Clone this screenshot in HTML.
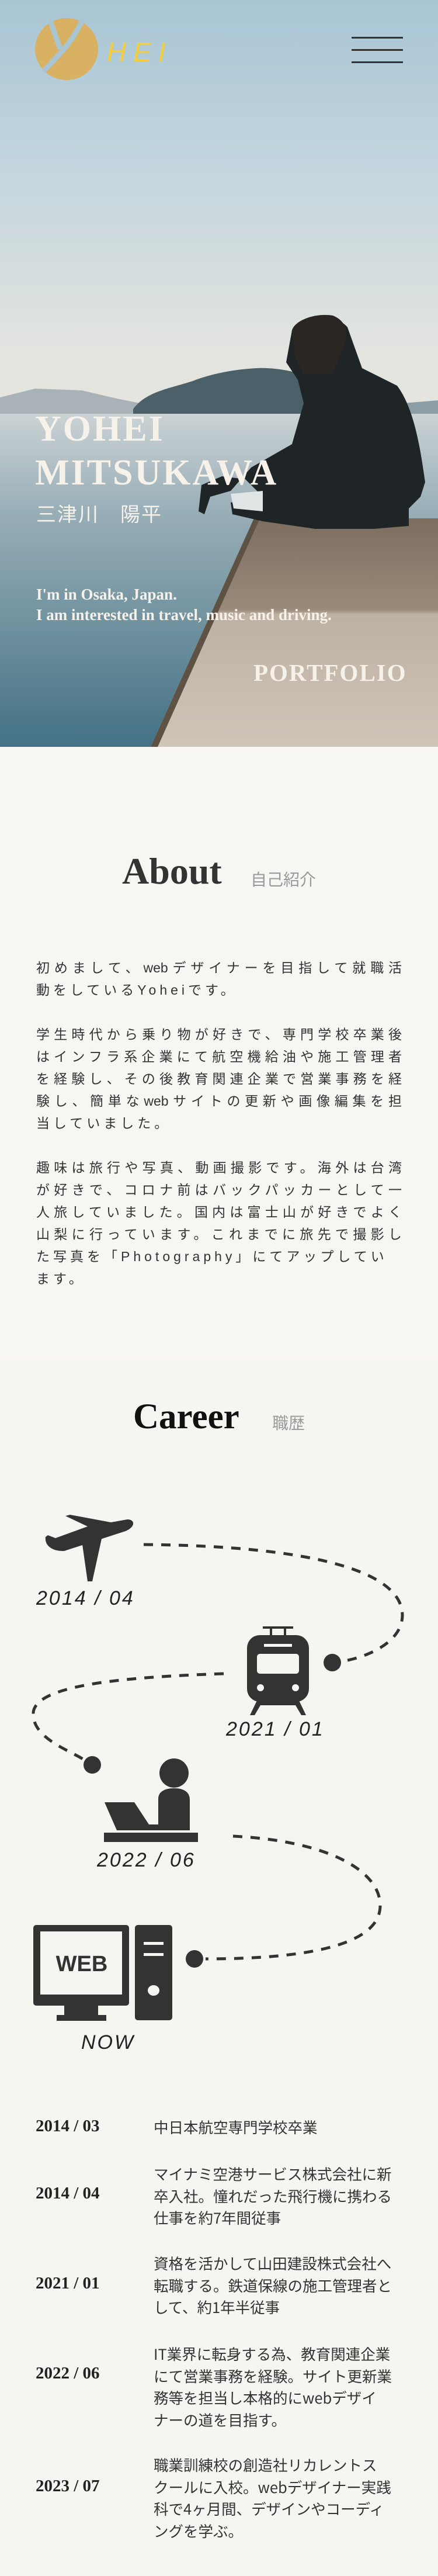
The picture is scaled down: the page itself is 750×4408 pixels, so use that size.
<!DOCTYPE html>
<html><head><meta charset="utf-8">
<style>
*{margin:0;padding:0;box-sizing:border-box}
body{width:750px;height:4408px;position:relative;background:#f5f6f1;font-family:"Liberation Sans","Noto Sans CJK JP",sans-serif;overflow:hidden}
.a{position:absolute;white-space:nowrap}
.serif{font-family:"Liberation Serif","Noto Serif CJK SC",serif}
.hero{color:#f6f1e9;font-weight:bold}
.p{position:absolute;left:62px;width:626px;font-size:23px;color:#333;line-height:38px}
.p div{text-align:justify;text-align-last:justify;height:38px}
.p div.l{text-align-last:left;letter-spacing:6px}
.hand{font-style:italic;font-size:34px;color:#222;letter-spacing:3px}
.date{position:absolute;left:61px;font-family:"Liberation Serif",serif;font-weight:bold;font-size:29px;color:#222}
.txt{position:absolute;left:263px;width:430px;font-size:25.5px;line-height:37.6px;color:#333;font-family:"Noto Sans CJK JP",sans-serif}
</style></head><body>

<svg class="a" style="left:0;top:0" width="750" height="1278" viewBox="0 0 750 1278">
<defs>
<linearGradient id="sky" x1="0" y1="0" x2="0" y2="1">
<stop offset="0" stop-color="#a8c5d4"/><stop offset="0.35" stop-color="#bfd3dd"/><stop offset="0.85" stop-color="#e2e4e0"/><stop offset="1" stop-color="#e6e4de"/>
</linearGradient>
<linearGradient id="sea" x1="0" y1="0" x2="0" y2="1">
<stop offset="0" stop-color="#ccd3d5"/><stop offset="0.3" stop-color="#98aeb7"/><stop offset="0.7" stop-color="#688c9a"/><stop offset="1" stop-color="#447185"/>
</linearGradient>
<linearGradient id="pier" x1="0" y1="0" x2="0" y2="1">
<stop offset="0" stop-color="#7d6d5f"/><stop offset="0.4" stop-color="#9a8a7a"/><stop offset="0.42" stop-color="#bdb1a3"/><stop offset="1" stop-color="#cfc5b8"/>
</linearGradient>
</defs>
<rect width="750" height="705" fill="url(#sky)"/>
<rect y="705" width="750" height="573" fill="url(#sea)"/>
<path d="M0,680 L60,665 L140,668 L200,682 L240,690 L300,700 L300,708 L0,708Z" fill="#a9b3b7"/>
<path d="M228,700 C250,670 290,665 330,652 C360,640 400,632 440,630 C480,628 520,640 560,652 C600,660 640,670 680,690 L705,708 L228,708Z" fill="#4b6068"/>
<path d="M690,690 L750,685 L750,708 L700,708Z" fill="#8c9ea5"/>
<path d="M435,887 L750,887 L750,1278 L258,1278Z" fill="url(#pier)"/>
<path d="M435,887 L258,1278 L270,1278 L445,887Z" fill="#5e5245"/>
<path d="M500,565 C520,540 575,535 595,560 L620,630 L680,660 C710,700 720,770 728,825 L720,850 L700,870 L700,900 L640,905 L540,905 L450,892 L398,880 L395,860 L450,850 L440,840 L420,820 L380,815 L345,830 L340,875 L350,880 L360,850 L395,840 L430,800 L500,760 L520,690 L510,650 L490,620 Z" fill="#1f2427"/>
<path d="M395,845 L450,840 L450,875 L400,870Z" fill="#dfe4e5"/>
<path d="M500,565 C505,548 540,535 570,540 C590,548 598,565 590,590 L570,640 L520,640 L505,610Z" fill="#2a2624"/>
</svg>

<svg class="a" style="left:0;top:0" width="300" height="150" viewBox="0 0 300 150">
<ellipse cx="114" cy="84" rx="54" ry="53" fill="#d8b163"/>
<path d="M86,34 C90,50 98,68 103,84" stroke="#a9c5d2" stroke-width="9" fill="none"/>
<path d="M142,32 C130,60 110,85 95,100 C88,108 80,116 74,122" stroke="#a9c5d2" stroke-width="9" fill="none"/>
</svg>
<div class="a" style="left:183px;top:62px;font-size:46px;font-style:italic;color:#f5cc3a;letter-spacing:12px;font-family:'Liberation Sans',sans-serif">HEI</div>
<div class="a" style="left:602px;top:63px;width:88px;height:3px;background:#333"></div>
<div class="a" style="left:602px;top:84px;width:88px;height:3px;background:#333"></div>
<div class="a" style="left:602px;top:105px;width:88px;height:3px;background:#333"></div>

<div class="a serif hero" style="left:60px;top:700px;font-size:62px;line-height:68px;letter-spacing:3px">YOHEI</div>
<div class="a serif hero" style="left:60px;top:775px;font-size:62px;line-height:68px;letter-spacing:3px">MITSUKAWA</div>
<div class="a hero" style="left:62px;top:858px;font-size:34px;font-weight:normal;letter-spacing:2px;font-family:'Noto Sans CJK JP',sans-serif;line-height:40px">三津川　陽平</div>
<div class="a serif hero" style="left:62px;top:1000px;font-size:27px;line-height:35px">I'm in Osaka, Japan.<br>I am interested in travel, music and driving.</div>
<div class="a serif hero" style="left:434px;top:1127px;font-size:41px;letter-spacing:2px">PORTFOLIO</div>

<div class="a" style="left:0;top:1278px;width:750px;height:1050px;background:#f8f6f2"></div>
<div class="a serif" style="left:209px;top:1454px;font-size:64px;font-weight:bold;color:#333">About</div>
<div class="a" style="left:429px;top:1486px;font-size:28px;color:#999;font-family:'Noto Sans CJK JP',sans-serif;line-height:36px">自己紹介</div>

<div class="p" style="top:1637px">
<div>初めまして、webデザイナーを目指して就職活</div>
<div class="l">動をしているYoheiです。</div>
<div></div>
<div>学生時代から乗り物が好きで、専門学校卒業後</div>
<div>はインフラ系企業にて航空機給油や施工管理者</div>
<div>を経験し、その後教育関連企業で営業事務を経</div>
<div>験し、簡単なwebサイトの更新や画像編集を担</div>
<div class="l">当していました。</div>
<div></div>
<div>趣味は旅行や写真、動画撮影です。海外は台湾</div>
<div>が好きで、コロナ前はバックパッカーとして一</div>
<div>人旅していました。国内は富士山が好きでよく</div>
<div>山梨に行っています。これまでに旅先で撮影し</div>
<div class="l">た写真を「Photography」にてアップしてい</div>
<div class="l">ます。</div>
</div>

<div class="a serif" style="left:228px;top:2390px;font-size:61px;font-weight:bold;color:#111">Career</div>
<div class="a" style="left:466px;top:2416px;font-size:28px;color:#999;font-family:'Noto Sans CJK JP',sans-serif;line-height:36px">職歴</div>

<svg class="a" style="left:0;top:0" width="750" height="3550" viewBox="0 0 750 3550">
<g fill="none" stroke="#333" stroke-width="5" stroke-dasharray="16 14">
<path d="M246,2643 C500,2645 690,2680 689,2765 C688,2810 630,2835 590,2842"/>
<path d="M383,2864 C200,2870 60,2885 57,2931 C55,2975 120,2995 145,3012"/>
<path d="M399,3142 C560,3150 650,3200 651,3260 C652,3330 520,3352 352,3352"/>
</g>
<g fill="#333">
<circle cx="569" cy="2845" r="15"/>
<circle cx="158" cy="3020" r="15"/>
<circle cx="333" cy="3352" r="15"/>
<path d="M78,2630 C76,2645 90,2655 110,2654 L215,2620 C232,2613 232,2600 218,2600 L190,2605 L120,2592 L112,2594 L150,2612 L95,2632 L82,2627Z"/>
<path d="M140,2636 L176,2624 L158,2706 L150,2706Z"/>
<rect x="423" y="2798" width="106" height="114" rx="22"/>
<rect x="440" y="2830" width="72" height="34" rx="5" fill="#f5f6f1"/>
<rect x="452" y="2813" width="48" height="5" fill="#f5f6f1"/>
<circle cx="446" cy="2888" r="6" fill="#f5f6f1"/>
<circle cx="506" cy="2888" r="6" fill="#f5f6f1"/>
<rect x="450" y="2783" width="52" height="4"/>
<rect x="462" y="2783" width="4" height="16"/><rect x="486" y="2783" width="4" height="16"/>
<path d="M440,2910 L428,2935 L436,2935 L446,2918 L506,2918 L516,2935 L524,2935 L512,2910Z"/>
<circle cx="298" cy="3034" r="25"/>
<path d="M271,3078 C271,3066 282,3060 298,3060 C314,3060 325,3066 325,3080 L325,3132 L271,3132Z"/>
<path d="M179,3084 L230,3084 L255,3122 L287,3122 L287,3132 L200,3132Z"/>
<rect x="178" y="3136" width="161" height="16"/>
<rect x="57" y="3294" width="164" height="138" rx="5"/>
<rect x="69" y="3305" width="140" height="108" fill="#f5f6f1"/>
<rect x="110" y="3432" width="58" height="18"/>
<rect x="97" y="3448" width="85" height="10"/>
<rect x="231" y="3294" width="64" height="163" rx="5"/>
<rect x="246" y="3323" width="34" height="5" fill="#f5f6f1"/>
<rect x="246" y="3342" width="34" height="5" fill="#f5f6f1"/>
<ellipse cx="263" cy="3406" rx="10" ry="9" fill="#f5f6f1"/>
</g>
<text x="140" y="3373" text-anchor="middle" font-family="Liberation Sans, sans-serif" font-weight="bold" font-size="38" fill="#333">WEB</text>
</svg>
<div class="a hand" style="left:62px;top:2716px">2014 / 04</div>
<div class="a hand" style="left:387px;top:2940px">2021 / 01</div>
<div class="a hand" style="left:166px;top:3164px">2022 / 06</div>
<div class="a hand" style="left:139px;top:3476px">NOW</div>

<div class="date" style="top:3622px">2014 / 03</div>
<div class="txt" style="top:3621px">中日本航空専門学校卒業</div>

<div class="date" style="top:3737px">2014 / 04</div>
<div class="txt" style="top:3701px">マイナミ空港サービス株式会社に新<br>卒入社。憧れだった飛行機に携わる<br>仕事を約7年間従事</div>

<div class="date" style="top:3891px">2021 / 01</div>
<div class="txt" style="top:3854px">資格を活かして山田建設株式会社へ<br>転職する。鉄道保線の施工管理者と<br>して、約1年半従事</div>

<div class="date" style="top:4045px">2022 / 06</div>
<div class="txt" style="top:4009px">IT業界に転身する為、教育関連企業<br>にて営業事務を経験。サイト更新業<br>務等を担当し本格的にwebデザイ<br>ナーの道を目指す。</div>

<div class="date" style="top:4238px">2023 / 07</div>
<div class="txt" style="top:4199px">職業訓練校の創造社リカレントス<br>クールに入校。webデザイナー実践<br>科で4ヶ月間、デザインやコーディ<br>ングを学ぶ。</div>
</body></html>
